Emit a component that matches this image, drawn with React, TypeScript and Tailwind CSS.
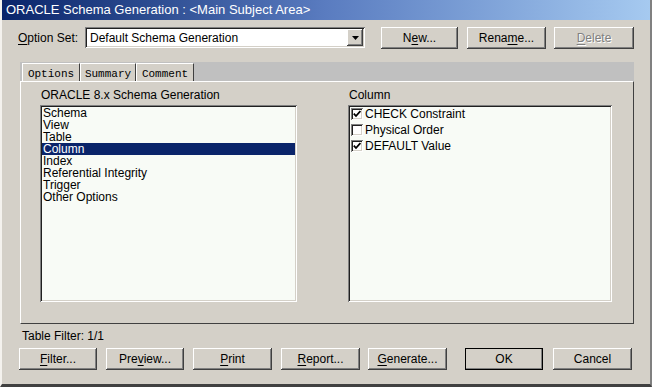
import React from "react";

const raised =
  "bg-[#d4d0c8] shadow-[inset_-1px_-1px_#404040,inset_1px_1px_#ffffff,inset_-2px_-2px_#808080,inset_2px_2px_#d4d0c8]";
const sunken =
  "shadow-[inset_1px_1px_#808080,inset_-1px_-1px_#ffffff,inset_2px_2px_#202020,inset_-2px_-2px_#d4d0c8]";

function U({ children }: { children: React.ReactNode }) {
  return <span className="underline underline-offset-[2px]">{children}</span>;
}

function Btn({
  w,
  children,
  disabled,
  isDefault,
  className = "",
}: {
  w: string;
  children: React.ReactNode;
  disabled?: boolean;
  isDefault?: boolean;
  className?: string;
}) {
  return (
    <div
      className={`${w} h-[22px] flex items-center justify-center ${raised} ${
        isDefault ? "outline outline-1 outline-black -outline-offset-1" : ""
      } ${disabled ? "text-[#808080] [text-shadow:1px_1px_#ffffff]" : "text-black"} ${className}`}
    >
      {children}
    </div>
  );
}

function Check({ checked }: { checked: boolean }) {
  return (
    <div
      className={`w-[12px] h-[12px] bg-white ${sunken} flex items-center justify-center shrink-0 mr-[2px]`}
    >
      {checked && (
        <svg width="8" height="8" viewBox="0 0 8 8">
          <path d="M0.8 3.6 L3 6 L7.4 1" stroke="#000" strokeWidth="1.8" fill="none" />
        </svg>
      )}
    </div>
  );
}

function Tab({ children, w }: { children: React.ReactNode; w: string }) {
  return (
    <div
      className={`h-[18px] ${w} bg-[#d4d0c8] border-l border-t border-white border-r border-r-[#404040] flex items-center justify-center pt-[3px] text-[11px]`}
      style={{ fontFamily: '"Liberation Mono", monospace' }}
    >
      {children}
    </div>
  );
}

export default function App() {
  const leftItems = [
    "Schema",
    "View",
    "Table",
    "Column",
    "Index",
    "Referential Integrity",
    "Trigger",
    "Other Options",
  ];
  const rightItems = [
    { label: "CHECK Constraint", checked: true },
    { label: "Physical Order", checked: false },
    { label: "DEFAULT Value", checked: true },
  ];

  return (
    <div
      className="w-[652px] h-[387px] bg-[#d4d0c8] flex flex-col text-[12px] text-black overflow-hidden border-l-2 border-l-[#f4f2ee] border-b-[3px] border-b-[#404040] border-r-2 border-r-[#808080]"
      style={{ fontFamily: '"Liberation Sans", Arial, sans-serif' }}
    >
      {/* Title bar */}
      <div className="h-[20px] shrink-0 flex items-center pl-[4px] text-white text-[13px] bg-gradient-to-r from-[#0a246a] via-[#5a7cc0] to-[#a6caf0]">
        ORACLE Schema Generation : &lt;Main Subject Area&gt;
      </div>

      {/* Option set row */}
      <div className="flex items-center mt-[7px] h-[21px] pl-[16px]">
        <div className="w-[67px]">
          <U>O</U>ption Set:
        </div>
        <div className={`w-[280px] h-[21px] bg-white ${sunken} flex items-center pl-[5px] pr-[2px]`}>
          <span className="flex-1">Default Schema Generation</span>
          <div className={`w-[16px] h-[17px] ${raised} flex items-center justify-center`}>
            <svg width="7" height="4" viewBox="0 0 7 4">
              <path d="M0 0 H7 L3.5 4 Z" fill="#000" />
            </svg>
          </div>
        </div>
        <Btn w="w-[77px]" className="ml-[16px]">
          N<U>e</U>w...
        </Btn>
        <Btn w="w-[79px]" className="ml-[9px]">
          Rena<U>m</U>e...
        </Btn>
        <Btn w="w-[80px]" className="ml-[8px]" disabled>
          <U>D</U>elete
        </Btn>
      </div>

      {/* Tabs */}
      <div className="ml-[18px] w-[614px] mt-[14px] h-[19px] bg-[#c0c0c0] flex items-end pl-[2px]">
        <Tab w="w-[58px]">Options</Tab>
        <Tab w="w-[56px]">Summary</Tab>
        <Tab w="w-[58px]">Comment</Tab>
      </div>

      {/* Panel */}
      <div className="ml-[18px] w-[614px] h-[243px] border-l border-t border-white border-r border-b border-r-[#404040] border-b-[#404040] flex pl-[19px] pt-[6px]">
        <div className="flex flex-col w-[257px]">
          <div className="h-[14px] leading-[14px] mb-[3px] pl-[1px]">ORACLE 8.x Schema Generation</div>
          <div className={`h-[197px] bg-[#f8fbf6] ${sunken} p-[2px]`}>
            {leftItems.map((it) => (
              <div
                key={it}
                className={`h-[12px] leading-[12px] pl-[1px] ${
                  it === "Column" ? "bg-[#0a246a] text-white" : ""
                }`}
              >
                {it}
              </div>
            ))}
          </div>
        </div>
        <div className="flex flex-col w-[264px] ml-[51px]">
          <div className="h-[14px] leading-[14px] mb-[3px] pl-[1px]">Column</div>
          <div className={`h-[197px] bg-[#f8fbf6] ${sunken} pl-[3px] pt-[1px]`}>
            {rightItems.map((it) => (
              <div key={it.label} className="h-[16px] flex items-center">
                <Check checked={it.checked} />
                <span>{it.label}</span>
              </div>
            ))}
          </div>
        </div>
      </div>

      {/* Filter text */}
      <div className="pl-[20px] mt-[5px] h-[14px] leading-[14px]">Table Filter: 1/1</div>

      {/* Bottom buttons */}
      <div className="flex pl-[17px] mt-[5px]">
        <Btn w="w-[78px]">
          <U>F</U>ilter...
        </Btn>
        <Btn w="w-[78px]" className="ml-[9px]">
          Pre<U>v</U>iew...
        </Btn>
        <Btn w="w-[79px]" className="ml-[9px]">
          <U>P</U>rint
        </Btn>
        <Btn w="w-[79px]" className="ml-[9px]">
          <U>R</U>eport...
        </Btn>
        <Btn w="w-[79px]" className="ml-[8px]">
          <U>G</U>enerate...
        </Btn>
        <Btn w="w-[78px]" className="ml-[18px]" isDefault>
          OK
        </Btn>
        <Btn w="w-[79px]" className="ml-[10px]">
          Cancel
        </Btn>
      </div>
    </div>
  );
}
